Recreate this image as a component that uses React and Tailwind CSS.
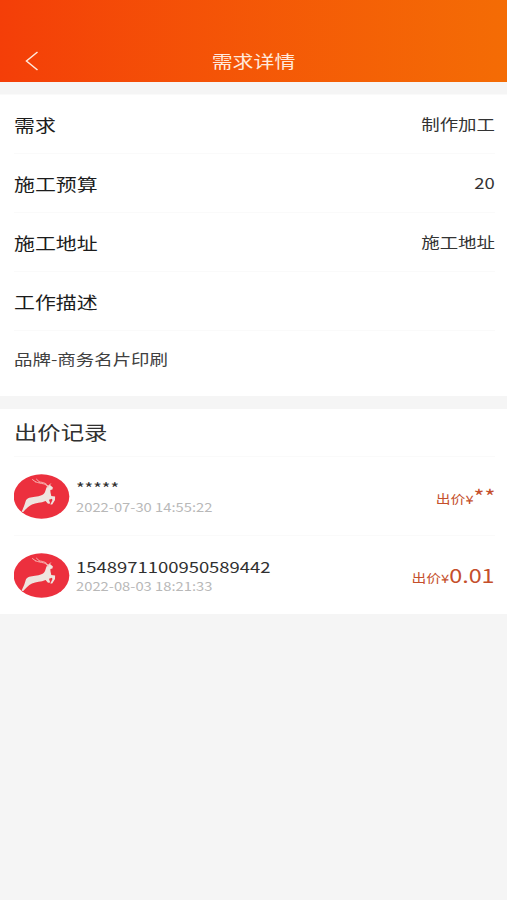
import React from 'react';

const details = [
  { id: 'demand', label: '需求', value: '制作加工' },
  { id: 'budget', label: '施工预算', value: '20' },
  { id: 'address', label: '施工地址', value: '施工地址' },
  { id: 'description', label: '工作描述', value: '' }
];

const bids = [
  { id: 1, name: '*****', time: '2022-07-30 14:55:22', price: '**' },
  { id: 2, name: '1548971100950589442', time: '2022-08-03 18:21:33', price: '0.01' }
];

function DeerAvatar() {
  return (
    <svg viewBox="0 0 56 45" className="h-[45px] w-14 shrink-0">
      <ellipse cx="27.5" cy="22.5" rx="27.8" ry="22.3" fill="#ec303e" />
      <path
        d="M7.6 37.6 C10 33 10.8 30 11.8 26.8 C13 23.8 17 23.4 21 22.8 C26 22 29.8 21.2 31 18 L32.5 13.5 L35.4 10.4 L38.9 13.4 L38.4 15.4 L36.4 16 C36.2 19 37.4 20.8 37.2 22.1 L41.1 22.4 L41 26 L38.2 30.6 L36.3 30.6 L38.4 26.2 L38 24.8 L35 25.8 L36.2 29.4 L34 29.7 L31.6 27 C27 29.2 22 28.6 18 30.4 C14 32.2 12 35 9 38.2 Z"
        fill="#eee4df"
      />
      <path
        d="M33.8 13.5 C32.5 8.5 27 10.3 21.5 7.8 M34.2 12.8 C33.5 9.8 29.5 8.2 25.5 8 M21.5 7.8 L18.5 5.6 M25.5 8 L22.5 5.2 M35 11.8 L36.6 9.8"
        fill="none"
        stroke="#f7bdb9"
        strokeWidth="0.9"
        strokeLinecap="round"
      />
    </svg>
  );
}

function DetailRow({ label, value }) {
  return (
    <div className="flex h-[59px] items-center justify-between border-b border-[#fafafa] pt-px">
      <span className="origin-left scale-x-[1.23] text-[17px] text-[#1c1c1c]">{label}</span>
      <span className="origin-right scale-x-[1.23] text-[15px] text-[#333333]">{value}</span>
    </div>
  );
}

function BidRow({ bid }) {
  return (
    <div className="flex h-[79px] items-center border-b border-[#fafafa] last:h-[78px] last:border-b-0">
      <DeerAvatar />
      <div className="ml-[6px] flex flex-1 flex-col items-start pt-[2px]">
        <span className="origin-left scale-x-[1.23] text-[15px] leading-[20px] text-[#303030]">
          {bid.name}
        </span>
        <span className="origin-left scale-x-[1.23] text-xs leading-[18px] text-[#b8b8b8]">
          {bid.time}
        </span>
      </div>
      <div className="flex origin-right scale-x-[1.23] items-baseline text-[#c54f2b]">
        <span className="text-xs">出价¥</span>
        <span className="text-[19px] leading-6">{bid.price}</span>
      </div>
    </div>
  );
}

function App() {
  return (
    <div className="min-h-screen bg-[#f5f5f5] font-['Noto_Sans_CJK_SC',sans-serif]">
      <header className="grid h-[82px] grid-cols-[64px_1fr_64px] items-end bg-gradient-to-r from-[#f43e08] to-[#f46c05] pb-[9px] text-[#ffe9dc]">
        <svg viewBox="0 0 14 20" className="mb-[2px] ml-[25px] h-5 w-[14px]">
          <path d="M12.5 1 L1.5 10 L12.5 19" fill="none" stroke="currentColor" strokeWidth="1.5" />
        </svg>
        <h1 className="scale-x-[1.23] text-center text-[17px] leading-6">需求详情</h1>
      </header>

      <section className="mt-3 border-t border-[#fafafa] bg-white pr-3 pl-[14px]">
        {details.map(item => (
          <DetailRow key={item.id} label={item.label} value={item.value} />
        ))}
        <div className="flex h-[65px] items-center pb-[8px] text-[#404040]">
          <span className="origin-left scale-x-[1.23] text-[15px]">品牌-商务名片印刷</span>
        </div>
      </section>

      <section className="mt-[13px] bg-white pr-3 pl-[14px]">
        <div className="flex h-12 items-center border-b border-[#fafafa] text-[#303030]">
          <h2 className="origin-left scale-x-[1.23] text-[19px]">出价记录</h2>
        </div>
        {bids.map(bid => (
          <BidRow key={bid.id} bid={bid} />
        ))}
      </section>
    </div>
  );
}

export default App;
